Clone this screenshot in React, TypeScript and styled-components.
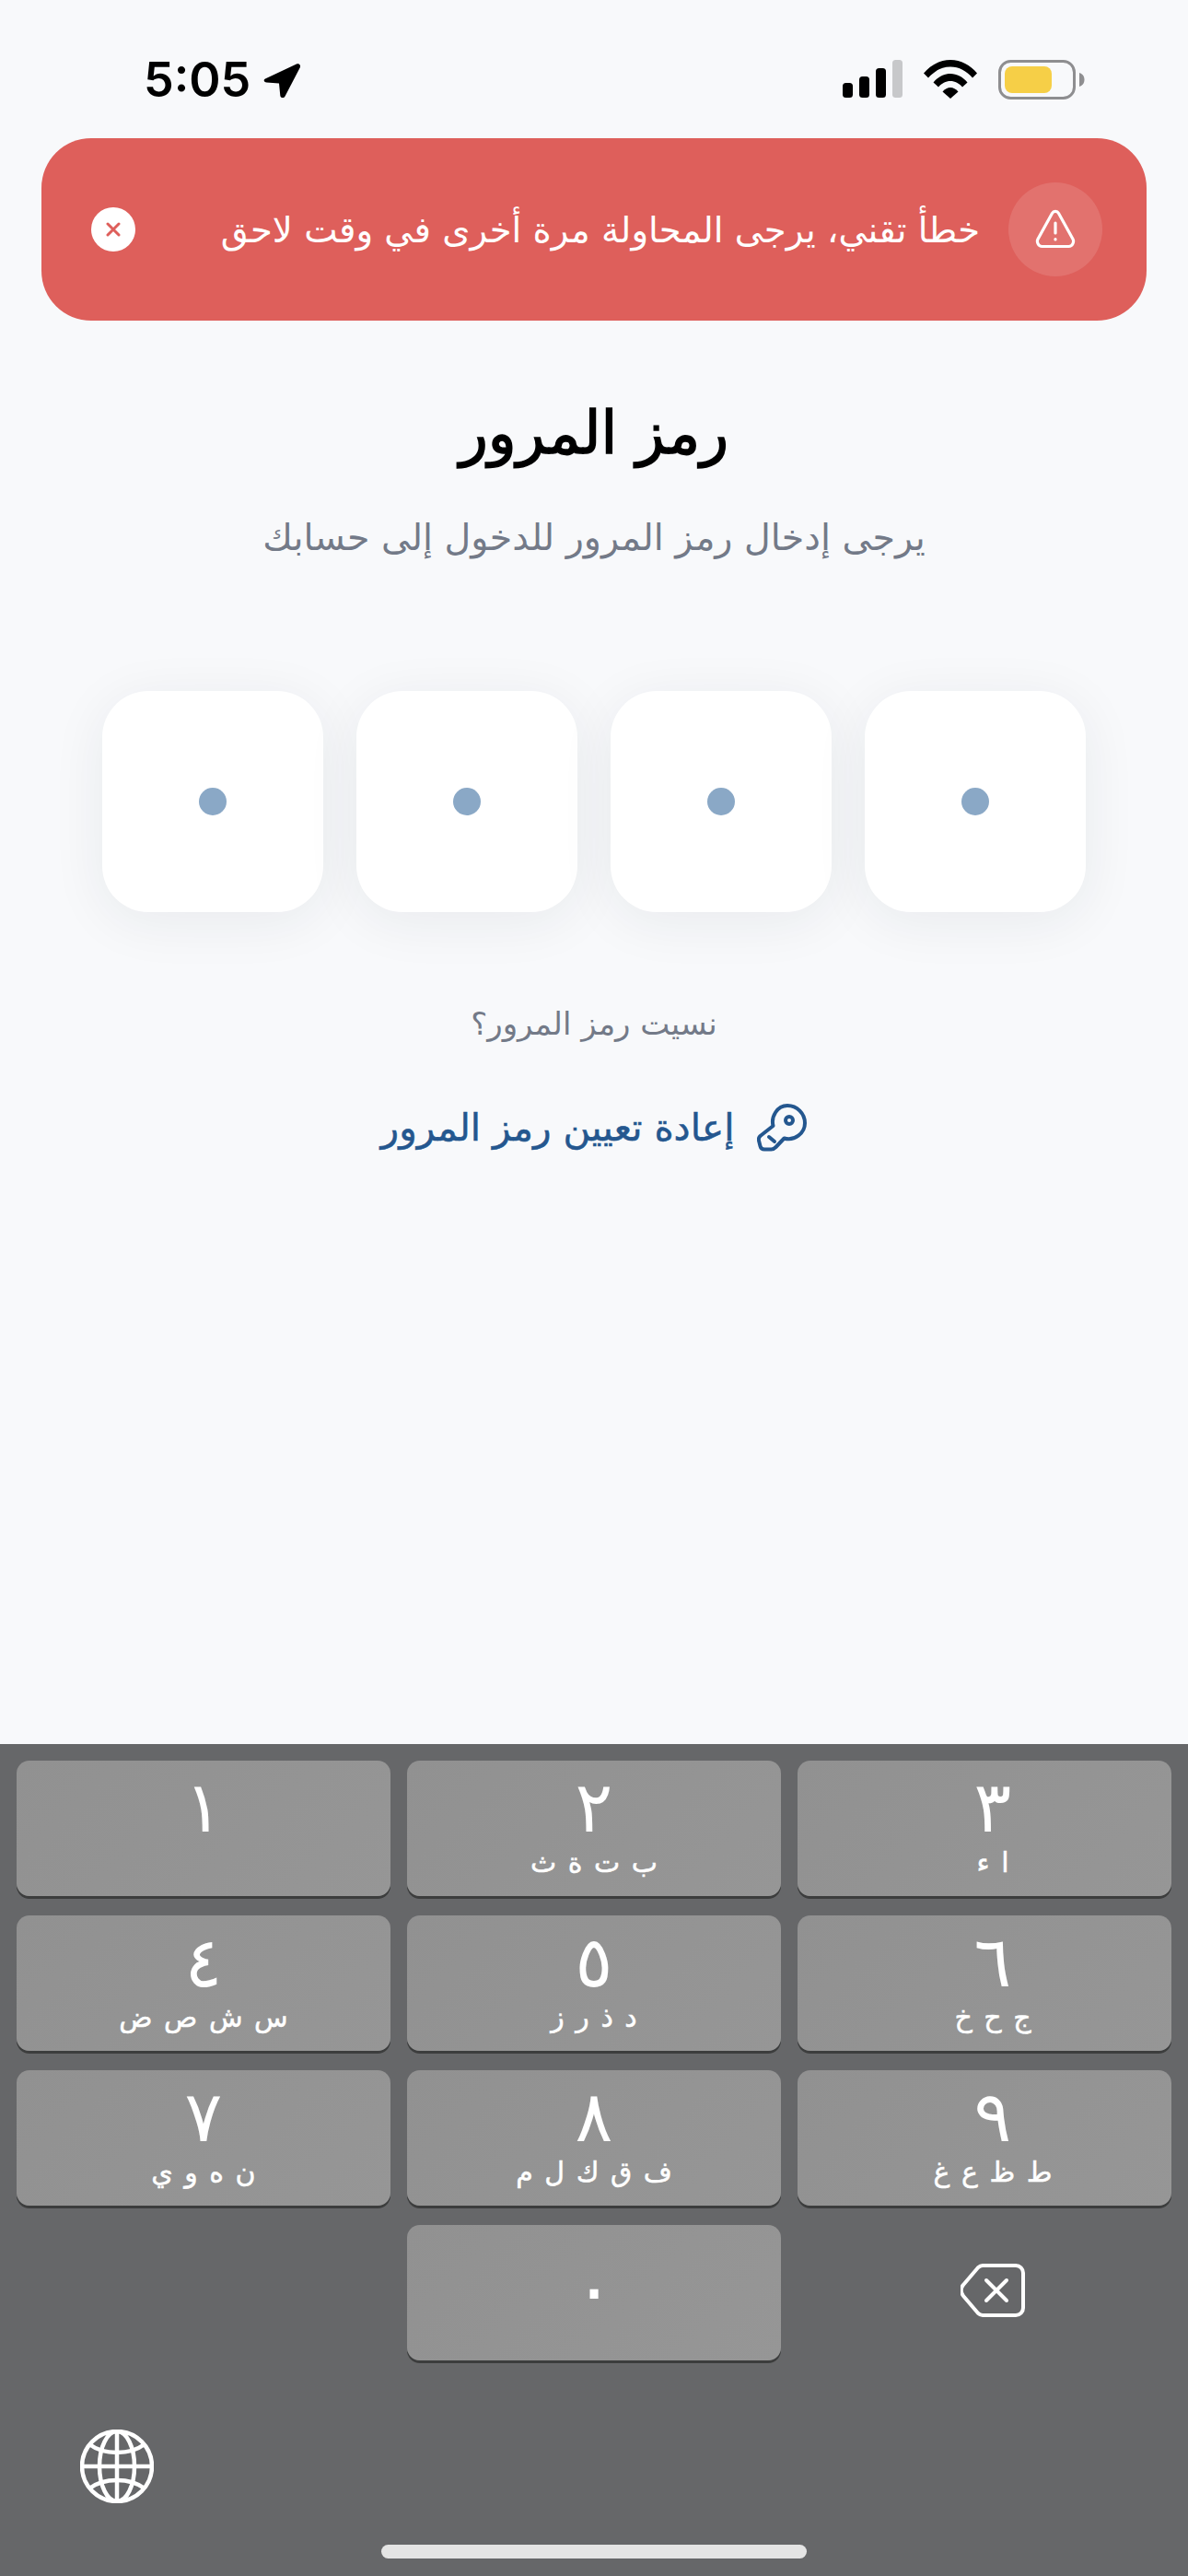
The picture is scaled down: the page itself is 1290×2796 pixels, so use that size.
import styled, { createGlobalStyle } from "styled-components";

const arabic = `"DejaVu Sans", "Noto Sans", sans-serif`;

const GlobalStyle = createGlobalStyle`
  html, body {
    margin: 0;
    padding: 0;
    background: #f8f9fb;
  }
  * {
    box-sizing: border-box;
  }
`;

// page
const Page = styled.div`
  width: 1290px;
  height: 2796px;
  display: flex;
  flex-direction: column;
  overflow: hidden;
  background: #f8f9fb;
  font-family: ${arabic};
`;

// status bar
const StatusBar = styled.div`
  height: 150px;
  flex-shrink: 0;
  padding: 65px 112px 0 156px;
  display: flex;
  justify-content: space-between;
  align-items: flex-start;
`;

const TimeGroup = styled.div`
  display: flex;
  align-items: center;
  gap: 13px;
  height: 43px;
`;

const Time = styled.span`
  font-family: Inter, "Liberation Sans", sans-serif;
  font-size: 52px;
  font-weight: 600;
  line-height: 43px;
  color: #000;
`;

const StatusIcons = styled.div`
  display: flex;
  align-items: flex-start;
  gap: 23px;
`;

// error banner
const Banner = styled.div`
  margin: 0 45px;
  height: 198px;
  flex-shrink: 0;
  padding: 0 48px 0 54px;
  display: flex;
  align-items: center;
  background: #de5f5b;
  border-radius: 54px;
`;

const BannerIcon = styled.div`
  width: 102px;
  height: 102px;
  border-radius: 50%;
  background: rgb(255 255 255 / 12%);
  display: flex;
  align-items: center;
  justify-content: center;
  flex-shrink: 0;
`;

const BannerText = styled.div`
  margin-right: 31px;
  font-size: 38.6px;
  color: #fff;
  white-space: nowrap;
`;

const CloseButton = styled.div`
  margin-right: auto;
  width: 48px;
  height: 48px;
  border-radius: 50%;
  background: #fff;
  display: flex;
  align-items: center;
  justify-content: center;
  flex-shrink: 0;
`;

// heading
const Title = styled.h1`
  margin: 77px 0 0;
  height: 90px;
  font-size: 64px;
  line-height: 90px;
  font-weight: 400;
  -webkit-text-stroke: 1.5px #000;
  text-align: center;
  color: #000;
`;

const Subtitle = styled.p`
  margin: 38px 0 0;
  height: 60px;
  font-size: 39.6px;
  line-height: 60px;
  text-align: center;
  color: #737a88;
`;

// code cells
const Cells = styled.div`
  margin-top: 137px;
  display: flex;
  justify-content: center;
  gap: 36px;
`;

const Cell = styled.div`
  width: 240px;
  height: 240px;
  border-radius: 50px;
  background: #fff;
  box-shadow: 0 10px 60px rgb(30 40 60 / 7%);
  display: flex;
  align-items: center;
  justify-content: center;
`;

const Dot = styled.span`
  width: 30px;
  height: 30px;
  border-radius: 50%;
  background: #8aa8c6;
`;

const Forgot = styled.p`
  margin: 91px 0 0;
  height: 60px;
  font-size: 34px;
  line-height: 60px;
  text-align: center;
  color: #737a88;
`;

const ResetLink = styled.div`
  margin-top: 53px;
  display: flex;
  justify-content: center;
  align-items: center;
  gap: 25px;
  height: 60px;
  color: #24578f;
  font-size: 40.5px;
  -webkit-text-stroke: 0.5px #24578f;
`;

// keyboard
const Keyboard = styled.div`
  margin-top: auto;
  height: 903px;
  flex-shrink: 0;
  padding: 18px 18px 0;
  background: #666769;
  display: flex;
  flex-direction: column;
`;

const KeyGrid = styled.div`
  display: grid;
  grid-template-columns: repeat(3, 406px);
  grid-auto-rows: 147px;
  column-gap: 18px;
  row-gap: 21px;
`;

const Key = styled.div<{ $offset?: boolean }>`
  border-radius: 14px;
  background: linear-gradient(135deg, #919191, #969696);
  box-shadow: 0 3px 0 #3c3d3d;
  color: #fff;
  display: flex;
  flex-direction: column;
  align-items: center;
  padding-left: ${(p) => (p.$offset ? "18px" : "0")};
`;

const Digit = styled.span`
  margin-top: 8px;
  height: 86px;
  font-size: 76px;
  line-height: 86px;
`;

const Letters = styled.span`
  height: 34px;
  font-size: 30px;
  line-height: 33px;
  word-spacing: 3px;
  -webkit-text-stroke: 0.5px #fff;
`;

const ZeroKey = styled(Key)`
  justify-content: center;
  padding-bottom: 10px;
  font-size: 84px;
  line-height: 1;
`;

const Backspace = styled.div`
  display: flex;
  align-items: center;
  justify-content: center;
  padding-left: 18px;
  padding-bottom: 6px;
`;

const GlobeRow = styled.div`
  margin-top: 75px;
  padding-left: 69px;
`;

const HomeBar = styled.div`
  margin: 41px auto 0;
  width: 462px;
  height: 15px;
  border-radius: 8px;
  background: #e4e4e4;
`;

const keys = [
  { digit: "١", letters: "" },
  { digit: "٢", letters: "ب ت ة ث" },
  { digit: "٣", letters: "ا ء" },
  { digit: "٤", letters: "س ش ص ض" },
  { digit: "٥", letters: "د ذ ر ز" },
  { digit: "٦", letters: "ج ح خ" },
  { digit: "٧", letters: "ن ه و ي" },
  { digit: "٨", letters: "ف ق ك ل م" },
  { digit: "٩", letters: "ط ظ ع غ" },
];

function App() {
  return (
    <Page>
      <GlobalStyle />
      <StatusBar>
        <TimeGroup>
          <Time>5:05</Time>
          <svg width="42" height="42" viewBox="0 0 42 42">
            <path
              d="M3 19.500 37 3.500c2.500-1.200 5 1.300 3.800 3.800L24.500 38.500c-1.200 2.500-5 2-5.200-.8L18 24.500 4.500 23.500C1.500 23.200.8 20.500 3 19.500Z"
              fill="#000"
            />
          </svg>
        </TimeGroup>
        <StatusIcons>
          <svg width="65" height="42" viewBox="0 0 65 42">
            <rect x="0" y="25" width="11" height="16" rx="3.5" fill="#000" />
            <rect x="18" y="18" width="11" height="23" rx="3.5" fill="#000" />
            <rect x="36" y="9" width="11" height="32" rx="3.5" fill="#000" />
            <rect x="54" y="0" width="11" height="41" rx="3.5" fill="#c7c8ca" />
          </svg>
          <svg width="58" height="42" viewBox="0 0 58 42">
            <path
              d="M0 14.500C7.500 5.500 17.500 0 29 0s21.500 5.500 29 14.500l-5 5C46.500 12 38.500 7.500 29 7.500S11.500 12 5 19.500Z"
              fill="#000"
            />
            <path
              d="M10.500 24.500C15.500 18.500 22 15 29 15s13.500 3.500 18.500 9.500l-5.500 5C38.500 25.500 34 23 29 23s-9.500 2.500-13 6.500Z"
              fill="#000"
            />
            <path d="M20.500 34.500C23 31.500 26 30 29 30s6 1.500 8.500 4.500L29 42Z" fill="#000" />
          </svg>
          <svg width="94" height="43" viewBox="0 0 94 43">
            <rect x="1.500" y="1.500" width="81" height="40" rx="12" fill="none" stroke="#8e8e90" strokeWidth="3" />
            <rect x="7" y="7" width="51" height="29" rx="8" fill="#f6cf47" />
            <path d="M88 14c3 .8 5.500 3.500 5.500 7.500S91 28.200 88 29Z" fill="#8e8e90" />
          </svg>
        </StatusIcons>
      </StatusBar>

      <Banner dir="rtl">
        <BannerIcon>
          <svg width="44" height="44" viewBox="0 0 44 44" fill="none" stroke="#fff" strokeWidth="3.2" strokeLinecap="round" strokeLinejoin="round">
            <path d="M18.500 4.500c1.600-2.800 5.400-2.800 7 0L41 32.500c1.600 3-.4 8-4.500 8h-29c-4.100 0-6.100-5-4.500-8Z" />
            <path d="M22 15v11" />
            <path d="M22 32.500v.4" />
          </svg>
        </BannerIcon>
        <BannerText>خطأ تقني، يرجى المحاولة مرة أخرى في وقت لاحق</BannerText>
        <CloseButton>
          <svg width="20" height="20" viewBox="0 0 20 20" fill="none" stroke="#de5f5b" strokeWidth="3" strokeLinecap="round">
            <path d="M4 4l12 12M16 4 4 16" />
          </svg>
        </CloseButton>
      </Banner>

      <Title dir="rtl">رمز المرور</Title>
      <Subtitle dir="rtl">يرجى إدخال رمز المرور للدخول إلى حسابك</Subtitle>

      <Cells>
        <Cell><Dot /></Cell>
        <Cell><Dot /></Cell>
        <Cell><Dot /></Cell>
        <Cell><Dot /></Cell>
      </Cells>

      <Forgot dir="rtl">نسيت رمز المرور؟</Forgot>
      <ResetLink dir="rtl">
        <svg width="54" height="53" viewBox="0 0 54 53" fill="none" stroke="#24578f" strokeWidth="4" strokeLinecap="round" strokeLinejoin="round">
          <path d="M17.500 24C15 14 22 2 33 2c10.500 0 19 8.500 19 19 0 11-11.500 20-22.500 16.500L20.500 47c-1.500 1.500-3 2.500-5 2.500H8c-2.500 0-4-1.500-4.500-3.500l-1.500-6c-.5-2 0-3.500 1.500-5Z" />
          <path d="M13 36l6 5" />
          <circle cx="35" cy="18" r="4" />
        </svg>
        <span>إعادة تعيين رمز المرور</span>
      </ResetLink>

      <Keyboard>
        <KeyGrid>
          {keys.map((key, i) => (
            <Key key={key.digit} $offset={i % 3 === 2}>
              <Digit>{key.digit}</Digit>
              <Letters dir="rtl">{key.letters}</Letters>
            </Key>
          ))}
          <span />
          <ZeroKey>٠</ZeroKey>
          <Backspace>
            <svg width="70" height="58" viewBox="0 0 70 58" fill="none" stroke="#fff" strokeWidth="4" strokeLinecap="round" strokeLinejoin="round">
              <path d="M24 2h36c4.500 0 8 3.500 8 8v38c0 4.500-3.500 8-8 8H24c-2 0-3.500-.8-5-2.200L3 35c-3-3.500-3-9 0-12L19 4.200C20.500 2.800 22 2 24 2Z" />
              <path d="M28 18l22 22M50 18 28 40" />
            </svg>
          </Backspace>
        </KeyGrid>
        <GlobeRow>
          <svg width="80" height="80" viewBox="0 0 80 80" fill="none" stroke="#fff" strokeWidth="4.5">
            <circle cx="40" cy="40" r="38" />
            <ellipse cx="40" cy="40" rx="19" ry="38" />
            <path d="M40 2v76M2 40h76" />
            <path d="M10 16c8 6 18 9 30 9s22-3 30-9" />
            <path d="M10 64c8-6 18-9 30-9s22 3 30 9" />
          </svg>
        </GlobeRow>
        <HomeBar />
      </Keyboard>
    </Page>
  );
}

export default App;
